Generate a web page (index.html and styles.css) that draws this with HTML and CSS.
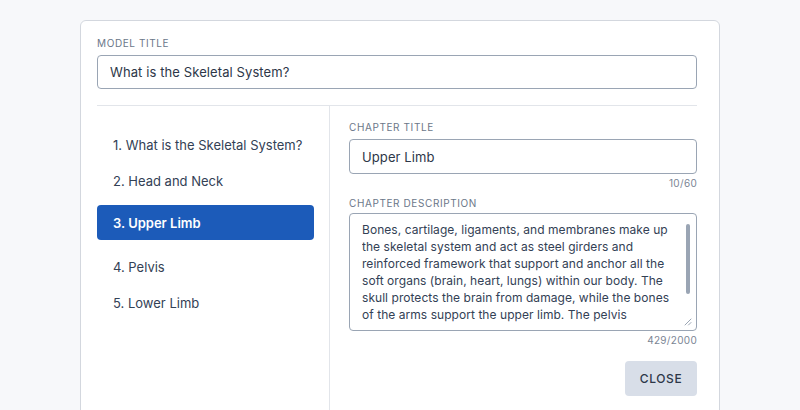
FILE: index.html
```html
<!DOCTYPE html>
<html>
<head>
<meta charset="utf-8">
<link rel="stylesheet" href="styles.css">
</head>
<body>
<div class="card">
  <div class="field">
    <label class="label">Model title</label>
    <input class="input" type="text" value="What is the Skeletal System?">
  </div>
  <div class="body">
    <ul class="chapters">
      <li class="chapter">1. What is the Skeletal System?</li>
      <li class="chapter">2. Head and Neck</li>
      <li class="chapter active">3. Upper Limb</li>
      <li class="chapter">4. Pelvis</li>
      <li class="chapter">5. Lower Limb</li>
    </ul>
    <div class="editor">
      <label class="label">Chapter title</label>
      <input class="input" type="text" value="Upper Limb">
      <div class="count">10/60</div>
      <label class="label label-gap">Chapter description</label>
      <div class="textbox">
        <textarea class="textarea" readonly>Bones, cartilage, ligaments, and membranes make up the skeletal system and act as steel girders and reinforced framework that support and anchor all the soft organs (brain, heart, lungs) within our body. The skull protects the brain from damage, while the bones of the arms support the upper limb. The pelvis supports the trunk and protects the pelvic organs, and the bones of the legs support the lower limb.</textarea>
        <span class="thumb"></span>
        <svg class="grip" width="8" height="8" viewBox="0 0 8 8"><path d="M7 1 L1 7 M7 4.5 L4.5 7" stroke="#9aa5b4" stroke-width="1" fill="none" stroke-linecap="round"/></svg>
      </div>
      <div class="count">429/2000</div>
      <div class="actions">
        <button class="btn">CLOSE</button>
      </div>
    </div>
  </div>
</div>
</body>
</html>
```

FILE: styles.css
```css
* { box-sizing: border-box; }
html, body { margin: 0; padding: 0; }
body {
  background: #f7f8fa;
  font-family: Inter, "Noto Sans", sans-serif;
  color: #334155;
  height: 410px;
  overflow: hidden;
}
.card {
  width: 640px;
  margin: 20px 0 0 80px;
  background: #fff;
  border: 1px solid #d3d7de;
  border-radius: 6px;
  padding: 16px 22px 0 16px;
  height: 420px;
}
.field {
  display: flex;
  flex-direction: column;
  padding-bottom: 16px;
  border-bottom: 1px solid #e2e5ea;
}
.label {
  display: block;
  font-size: 10px;
  line-height: 12px;
  letter-spacing: 0.6px;
  text-transform: uppercase;
  color: #6b7789;
  margin-bottom: 6px;
}
.input {
  display: block;
  width: 100%;
  height: 34px;
  border: 1px solid #9aa5b4;
  border-radius: 4px;
  padding: 0 12px;
  font-family: inherit;
  font-size: 13px;
  letter-spacing: 0.1px;
  color: #2d3748;
  background: #fff;
  outline: none;
}
.editor .input { height: 35px; }
.body {
  display: flex;
  height: 320px;
}
.chapters {
  list-style: none;
  margin: 0;
  padding: 21px 15px 0 0;
  width: 233px;
  flex: none;
  border-right: 1px solid #e2e5ea;
}
.chapter {
  height: 36px;
  display: flex;
  align-items: center;
  padding: 0 16px;
  font-size: 13px;
  color: #334155;
  letter-spacing: 0;
  white-space: nowrap;
}
.chapter.active {
  height: 35px;
  margin: 6px 0 9px;
  background: #1c5bb9;
  color: #fff;
  font-weight: 600;
  border-radius: 4px;
}
.editor {
  flex: 1;
  padding: 15px 0 0 19px;
  display: flex;
  flex-direction: column;
}
.count {
  text-align: right;
  font-size: 10px;
  line-height: 12px;
  color: #7b8594;
  margin-top: 3px;
  letter-spacing: 0.3px;
}
.label-gap { margin-top: 8px; margin-bottom: 4px; }
.textbox {
  position: relative;
  height: 118px;
  border: 1px solid #9aa5b4;
  border-radius: 4px;
  padding: 8px 20px 0 12px;
}
.textarea {
  display: block;
  width: 100%;
  height: 101px;
  border: none;
  padding: 0;
  margin: 0;
  font-family: inherit;
  font-size: 12px;
  letter-spacing: 0.05px;
  line-height: 16.9px;
  color: #334155;
  resize: none;
  outline: none;
  overflow: hidden;
  background: transparent;
}
.thumb {
  position: absolute;
  right: 6px;
  top: 10px;
  width: 4px;
  height: 70px;
  border-radius: 2px;
  background: #9aa5b4;
}
.grip {
  position: absolute;
  right: 4px;
  bottom: 4px;
}
.actions {
  display: flex;
  justify-content: flex-end;
  margin-top: 15px;
}
.btn {
  width: 72px;
  height: 35px;
  border: none;
  border-radius: 4px;
  background: #d8dee8;
  color: #2d3748;
  font-family: inherit;
  font-size: 12px;
  letter-spacing: 0.6px;
  font-weight: 500;
}
```
